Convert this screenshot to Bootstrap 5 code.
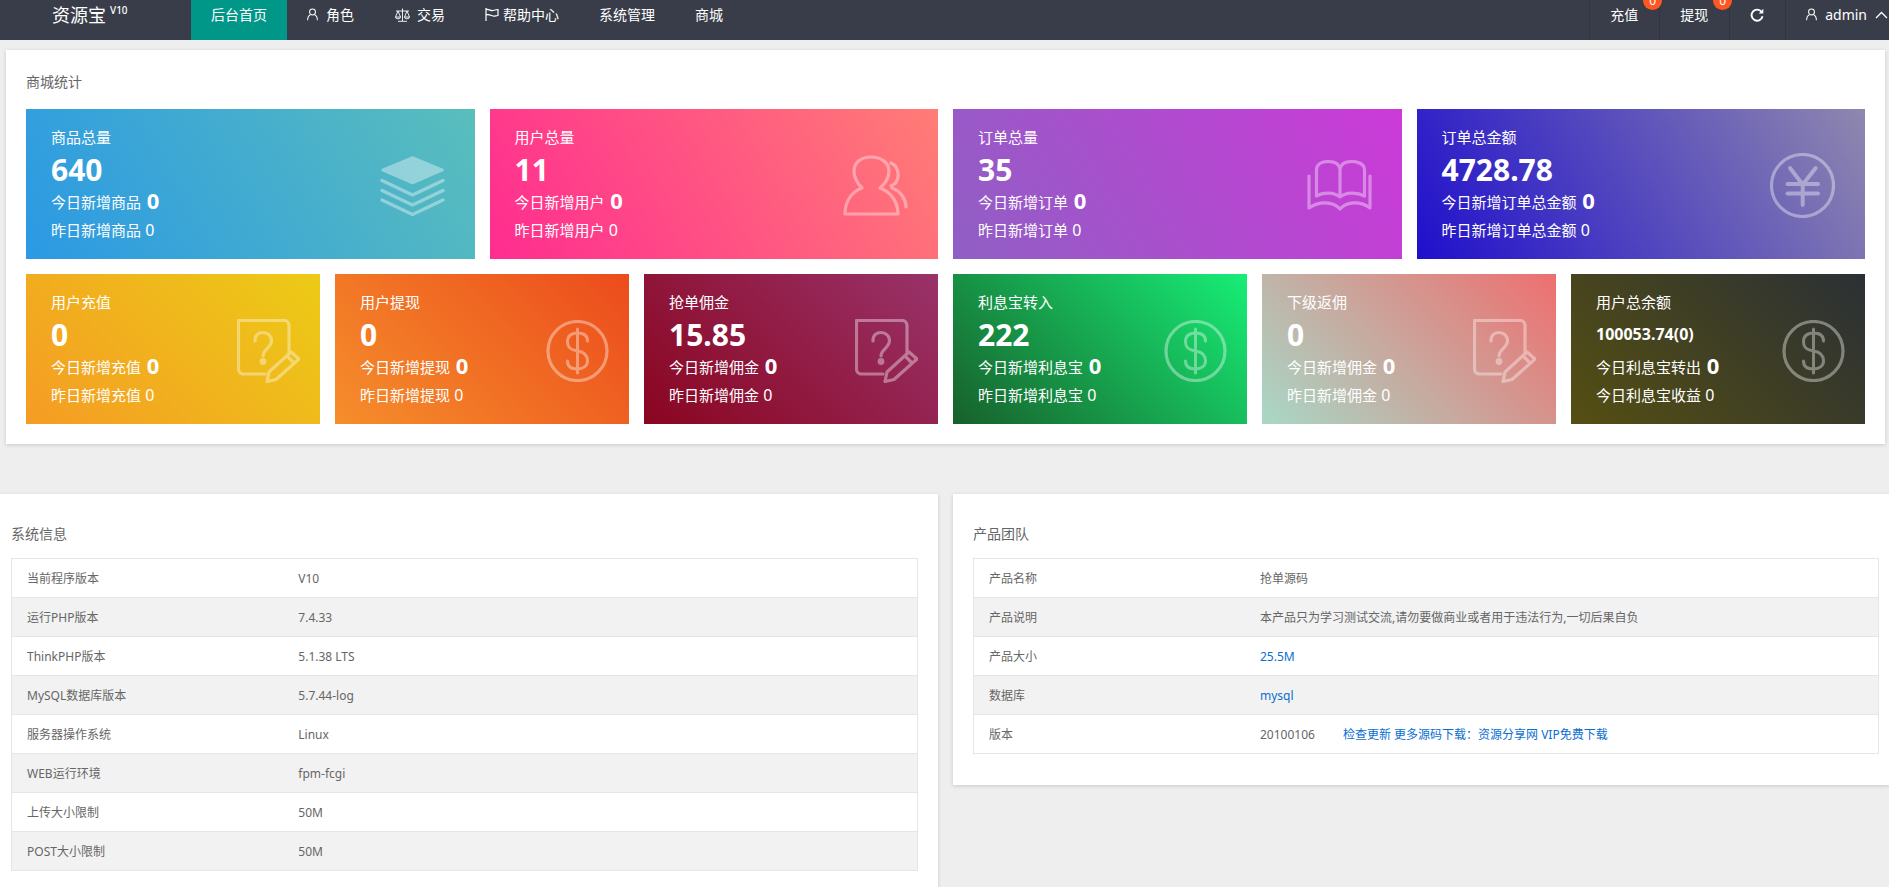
<!DOCTYPE html>
<html lang="zh-CN">
<head>
<meta charset="utf-8">
<title>资源宝</title>
<link href="https://cdn.jsdelivr.net/npm/bootstrap@5.3.0/dist/css/bootstrap.min.css" rel="stylesheet">
<style>
html,body{height:100%;overflow:hidden}
body{background:#eee;font-family:"Noto Sans","Noto Sans CJK SC",sans-serif;color:#666;font-size:14px}
.top-bar{height:40px;background:#393d49;padding:0;flex-wrap:nowrap;align-items:flex-start}
.top-bar .brand{width:191px;padding:0 0 0 52px;margin:0;height:30px;line-height:30px;color:#fff;font-size:18px;display:flex}
.top-bar .brand sup{font-size:10px;top:0;line-height:20px;margin-left:4px;position:relative;vertical-align:baseline;font-weight:500}
.top-bar .navbar-nav .nav-link{height:40px;line-height:30px;padding:0 20px;color:#fff;font-size:14px;display:flex;align-items:flex-start;position:relative}
.top-bar .nav-link svg{margin-top:8px;fill:none;stroke:#fff;stroke-width:1.1}
.top-bar .nav-link svg.ico-gap{margin-right:6px}
.top-bar .navbar-nav .nav-link.active-tab{background:#009688;color:#fff}
.top-bar .navbar-nav .nav-link.div-left{border-left:1px solid #32353f}
.top-bar .navbar-nav .nav-link.cash-tab{padding-right:21px}
.top-bar .navbar-nav .nav-link.refresh-tab{padding-right:21px}
.top-bar .navbar-nav .nav-link.me-tab{padding-right:1px}
.top-bar .nav-link .chev{margin-top:11px}
.pill-count{position:absolute;right:-3px;top:-9px;width:19px;height:19px;border-radius:50%;background:#ff5722;color:#fff;font-size:12px;line-height:19px;text-align:center;z-index:2}
.panel-a{background:#fff;box-shadow:0 1px 4px rgba(0,0,0,.16);margin:10px 4px 0 6px;padding:22px 20px 20px}
.panel-a>.panel-title{margin-bottom:17px}
.panel-title{font-size:14px;line-height:20px;color:#666}
.tile-row{display:flex;gap:15px}
.tile-row.big{margin-bottom:15px}
.tile{flex:1 1 0;height:150px;color:#fff;padding-left:25px;display:flex;justify-content:space-between;align-items:center}
.tile-row.big .tile{padding-right:30px}
.tile-row.small .tile{padding-right:20px}
.tile-text{align-self:flex-start;padding-top:17px}
.t-name,.t-sub{font-size:15px;line-height:22px;height:22px;white-space:nowrap}
.t-num{font-size:30px;font-weight:700;line-height:43px;height:41px}
.t-num.compact{font-size:16px}
.t-sub b{font-size:22px;vertical-align:-1px;line-height:22px}
.t-sub.last{margin-top:8px}
.t-sub span{font-size:16px}
.tile-ico{fill:none;stroke:#fff;opacity:.38;stroke-width:3.2;stroke-linecap:round;stroke-linejoin:round;flex:none;margin-top:3px}
.g1{background:linear-gradient(60deg,#2b99e4,#5abebc)}
.g2{background:linear-gradient(60deg,#ff2c90,#ff7d76)}
.g3{background:linear-gradient(60deg,#8f5fc4,#cc3ad8)}
.g4{background:linear-gradient(60deg,#1f0fcc,#8f88ae)}
.g5{background:linear-gradient(45deg,#f59c24,#eccb16)}
.g6{background:linear-gradient(45deg,#f58e2b,#ec4b1c)}
.g7{background:linear-gradient(45deg,#8a0520,#99336a)}
.g8{background:linear-gradient(45deg,#17602b,#17ee76)}
.g9{background:linear-gradient(45deg,#a8d8c6,#ee6f6f)}
.g10{background:linear-gradient(45deg,#554f12,#2b3035)}
.lower{display:flex;gap:15px;margin-top:50px;align-items:flex-start}
.panel-b{background:#fff;box-shadow:0 1px 4px rgba(0,0,0,.16);padding-top:30px;padding-bottom:31px}
.panel-b.left-p{width:938px;padding-left:11px;padding-right:20px}
.panel-b.right-p{flex:1 1 0;padding-left:20px;padding-right:10px}
.panel-b .panel-title{margin-bottom:14px}
.info-table{--bs-table-border-color:#e6e6e6;--bs-table-color:#666;table-layout:fixed;font-size:12px;margin:0;color:#666;border:1px solid #e6e6e6}
.info-table td{height:39px;padding:1px 15px 0;vertical-align:middle;border-width:1px 0;border-style:solid;border-color:#e6e6e6}
.info-table td:first-child{width:30%}
.info-table tr:nth-child(even) td{--bs-table-bg:#f2f2f2;background:#f2f2f2}
.info-table a{color:#0a6ed1;text-decoration:none}
.info-table a.gap-left{margin-left:28px}
</style>
</head>
<body>
<svg class="d-none" xmlns="http://www.w3.org/2000/svg">
<symbol id="i-layers" viewBox="0 0 65 60"><path d="M32.500 1.500 62.500 14 32.500 27 2.500 14Z" fill="#fff" stroke-width="2.500"/><path d="M2 24.500 32.500 39 63 24.500M2 34.500 32.500 49 63 34.500M2 44 32.500 58.500 63 44"/></symbol>
<symbol id="i-users" viewBox="0 0 65 61"><path d="M19 33C14 28 11 22 11 16 11 7 19 2 28 2 37 2 46 7 46 16 46 22 43 28 37 33 48 37 55 47 55 59H2C2 47 8 37 19 33Z"/><path d="M48 8C57 12 58 27 48 31M49 33C58 36 63 45 63 52"/></symbol>
<symbol id="i-book" viewBox="0 0 65 51"><path d="M9.500 35V10C9.500 4 15 1.500 21 1.500 27 1.500 32 4 33 9 34 4 39 1.500 45 1.500 51 1.500 57.500 4 57.500 10V35M33 9V37M9.500 36C16 32 27 32 33 37 39 32 50 32 57.500 36M2 16V48C12 41 26 41 33 49 40 41 54 41 63 48V16"/></symbol>
<symbol id="i-yuan" viewBox="0 0 65 65"><circle cx="32.500" cy="32.500" r="31"/><path d="M20 15 32.700 31.500 45.700 15M32.700 31.500V52M17.500 31H48M17.500 40.500H48" stroke-width="4"/></symbol>
<symbol id="i-doc" viewBox="0 0 63 64"><path d="M52 34V6A5 5 0 0 0 47 1.500H1.500V50A5 5 0 0 0 6.500 55H28"/><path d="M30 62.500 32 53 54 33 62 40 39 60.500ZM50 37 57 44"/><path d="M18 22C18 15 22 13.500 26 13.500 31 13.500 34.500 17 34.500 21.500 34.500 29 26 30 26 37"/><circle cx="26" cy="42.500" r="1.800" fill="#fff"/></symbol>
<symbol id="i-dollar" viewBox="0 0 63 62"><circle cx="31.500" cy="31" r="29.500"/><path d="M41.500 21C41.500 15 37 13 31.500 13 25 13 21.500 16 21.500 22 21.500 28 25 30 31.500 31 38 32 41.500 35 41.500 41 41.500 46 37 49 31.500 49 25 49 21.500 46 21.500 41M31.500 9V53" stroke-width="3"/></symbol>
<symbol id="n-user" viewBox="0 0 12 13"><circle cx="6" cy="3.800" r="3.200"/><path d="M3.600 6.800C1.600 7.800.7 10 .7 12.700M8.400 6.800C10.400 7.800 11.300 10 11.300 12.700"/></symbol>
</svg>

<nav class="navbar navbar-expand top-bar">
  <a class="navbar-brand brand" href="#">资源宝<sup>V10</sup></a>
  <ul class="navbar-nav me-auto">
    <li class="nav-item"><a class="nav-link active-tab" href="#">后台首页</a></li>
    <li class="nav-item"><a class="nav-link" href="#"><svg class="me-2" width="11" height="13"><use href="#n-user"/></svg>角色</a></li>
    <li class="nav-item"><a class="nav-link" href="#"><svg class="ico-gap" width="17" height="14" viewBox="0 0 17 14"><path stroke-width=".9" d="M8.500 .5V13M4 13.300H13M2 3H15M4 3 1.500 9H6.500ZM13 3 10.500 9H15.500ZM1.500 9A2.500 1.800 0 0 0 6.500 9M10.500 9A2.500 1.800 0 0 0 15.500 9"/></svg>交易</a></li>
    <li class="nav-item"><a class="nav-link" href="#"><svg class="me-1" width="14" height="13" viewBox="0 0 14 13"><path d="M1 0V13M1 1.500C4 1 6 3 8 2.500S12 1.500 13 1.500V7.500C11 7.500 10 8.500 8 8S4 6 1 7" stroke-width="1.200"/></svg>帮助中心</a></li>
    <li class="nav-item"><a class="nav-link" href="#">系统管理</a></li>
    <li class="nav-item"><a class="nav-link" href="#">商城</a></li>
  </ul>
  <ul class="navbar-nav">
    <li class="nav-item"><a class="nav-link div-left cash-tab" href="#">充值<span class="pill-count">0</span></a></li>
    <li class="nav-item"><a class="nav-link div-left cash-tab" href="#">提现<span class="pill-count">0</span></a></li>
    <li class="nav-item"><a class="nav-link div-left refresh-tab" href="#"><svg width="14" height="14" viewBox="0 0 14 14"><path d="M11.600 4A5.500 5.500 0 1 0 12.500 8.200" stroke-width="1.900"/><path d="M13.300 .8V5.400H8.700Z" fill="#fff" stroke="none"/></svg></a></li>
    <li class="nav-item"><a class="nav-link div-left me-tab" href="#"><svg class="me-2" width="11" height="13"><use href="#n-user"/></svg>admin<svg class="ms-2 chev" width="13" height="8" viewBox="0 0 13 8"><path d="M1 7 6.500 1.500 12 7" stroke-width="1.300"/></svg></a></li>
  </ul>
</nav>

<main>
<section class="panel-a">
  <div class="panel-title">商城统计</div>
  <div class="tile-row big" id="row-a">
    <div class="tile g1"><div class="tile-text"><div class="t-name">商品总量</div><div class="t-num">640</div><div class="t-sub">今日新增商品<b> 0</b></div><div class="t-sub last">昨日新增商品<span> 0</span></div></div><svg class="tile-ico" width="65" height="60"><use href="#i-layers"/></svg></div>
    <div class="tile g2"><div class="tile-text"><div class="t-name">用户总量</div><div class="t-num">11</div><div class="t-sub">今日新增用户<b> 0</b></div><div class="t-sub last">昨日新增用户<span> 0</span></div></div><svg class="tile-ico" width="65" height="61"><use href="#i-users"/></svg></div>
    <div class="tile g3"><div class="tile-text"><div class="t-name">订单总量</div><div class="t-num">35</div><div class="t-sub">今日新增订单<b> 0</b></div><div class="t-sub last">昨日新增订单<span> 0</span></div></div><svg class="tile-ico" width="65" height="51"><use href="#i-book"/></svg></div>
    <div class="tile g4"><div class="tile-text"><div class="t-name">订单总金额</div><div class="t-num">4728.78</div><div class="t-sub">今日新增订单总金额<b> 0</b></div><div class="t-sub last">昨日新增订单总金额<span> 0</span></div></div><svg class="tile-ico" width="65" height="65"><use href="#i-yuan"/></svg></div>
  </div>
  <div class="tile-row small" id="row-b">
    <div class="tile g5"><div class="tile-text"><div class="t-name">用户充值</div><div class="t-num">0</div><div class="t-sub">今日新增充值<b> 0</b></div><div class="t-sub last">昨日新增充值<span> 0</span></div></div><svg class="tile-ico" width="63" height="64"><use href="#i-doc"/></svg></div>
    <div class="tile g6"><div class="tile-text"><div class="t-name">用户提现</div><div class="t-num">0</div><div class="t-sub">今日新增提现<b> 0</b></div><div class="t-sub last">昨日新增提现<span> 0</span></div></div><svg class="tile-ico" width="63" height="62"><use href="#i-dollar"/></svg></div>
    <div class="tile g7"><div class="tile-text"><div class="t-name">抢单佣金</div><div class="t-num">15.85</div><div class="t-sub">今日新增佣金<b> 0</b></div><div class="t-sub last">昨日新增佣金<span> 0</span></div></div><svg class="tile-ico" width="63" height="64"><use href="#i-doc"/></svg></div>
    <div class="tile g8"><div class="tile-text"><div class="t-name">利息宝转入</div><div class="t-num">222</div><div class="t-sub">今日新增利息宝<b> 0</b></div><div class="t-sub last">昨日新增利息宝<span> 0</span></div></div><svg class="tile-ico" width="63" height="62"><use href="#i-dollar"/></svg></div>
    <div class="tile g9"><div class="tile-text"><div class="t-name">下级返佣</div><div class="t-num">0</div><div class="t-sub">今日新增佣金<b> 0</b></div><div class="t-sub last">昨日新增佣金<span> 0</span></div></div><svg class="tile-ico" width="63" height="64"><use href="#i-doc"/></svg></div>
    <div class="tile g10"><div class="tile-text"><div class="t-name">用户总余额</div><div class="t-num compact">100053.74(0)</div><div class="t-sub">今日利息宝转出<b> 0</b></div><div class="t-sub last">今日利息宝收益<span> 0</span></div></div><svg class="tile-ico" width="63" height="62"><use href="#i-dollar"/></svg></div>
  </div>
</section>

<div class="lower">
  <section class="panel-b left-p">
    <div class="panel-title">系统信息</div>
    <table class="table info-table">
      <tbody>
        <tr><td>当前程序版本</td><td>V10</td></tr>
        <tr><td>运行PHP版本</td><td>7.4.33</td></tr>
        <tr><td>ThinkPHP版本</td><td>5.1.38 LTS</td></tr>
        <tr><td>MySQL数据库版本</td><td>5.7.44-log</td></tr>
        <tr><td>服务器操作系统</td><td>Linux</td></tr>
        <tr><td>WEB运行环境</td><td>fpm-fcgi</td></tr>
        <tr><td>上传大小限制</td><td>50M</td></tr>
        <tr><td>POST大小限制</td><td>50M</td></tr>
      </tbody>
    </table>
  </section>
  <section class="panel-b right-p">
    <div class="panel-title">产品团队</div>
    <table class="table info-table">
      <tbody>
        <tr><td>产品名称</td><td>抢单源码</td></tr>
        <tr><td>产品说明</td><td>本产品只为学习测试交流,请勿要做商业或者用于违法行为,一切后果自负</td></tr>
        <tr><td>产品大小</td><td><a href="#">25.5M</a></td></tr>
        <tr><td>数据库</td><td><a href="#">mysql</a></td></tr>
        <tr><td>版本</td><td>20100106<a class="gap-left" href="#">检查更新 更多源码下载：资源分享网 VIP免费下载</a></td></tr>
      </tbody>
    </table>
  </section>
</div>
</main>
<script src="https://cdn.jsdelivr.net/npm/bootstrap@5.3.0/dist/js/bootstrap.bundle.min.js"></script>
</body>
</html>
